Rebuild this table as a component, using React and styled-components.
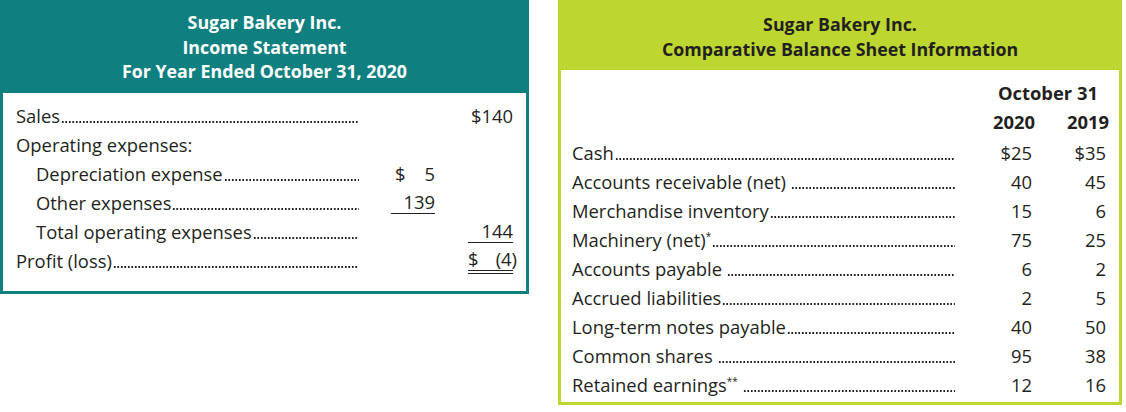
import React from "react";
import styled, { createGlobalStyle } from "styled-components";

const TEAL = "#107f7f";
const LIME = "#bdd630";
const INK = "#231f20";

const GlobalStyle = createGlobalStyle`
  html, body {
    margin: 0;
    padding: 0;
    background: #ffffff;
  }
  body {
    font-family: "Open Sans", "Liberation Sans", sans-serif;
    color: ${INK};
  }
`;

const Page = styled.div`
  display: flex;
  align-items: flex-start;
  gap: 29px;
  width: 1126px;
  height: 412px;
`;

const Panel = styled.section`
  box-sizing: border-box;
  width: ${(p) => p.$width}px;
  border: 3px solid ${(p) => p.$color};
  background: #fff;
`;

const Header = styled.header`
  background: ${(p) => p.$color};
  color: ${(p) => p.$text};
  margin: -3px -3px 0;
  padding: ${(p) => p.$pad};
  text-align: center;
  font-weight: 700;
  font-size: 17.8px;
  line-height: 24.5px;
`;

const Body = styled.div`
  display: grid;
  grid-template-columns: ${(p) => p.$cols};
  padding: ${(p) => p.$pad};
  font-size: 18.4px;
  line-height: 29px;
`;

const Label = styled.div`
  display: flex;
  align-items: baseline;
  min-width: 0;
  padding-left: ${(p) => (p.$indent ? "20px" : "0")};
  grid-column: ${(p) => (p.$full ? "1 / -1" : "auto")};
  white-space: nowrap;
`;

const LabelText = styled.span`
  padding-right: ${(p) => (p.$space ? "5px" : "1px")};
`;

// dotted leader drawn as a repeating dot pattern sitting on the baseline
const Dots = styled.span`
  flex: 1;
  height: 2px;
  background-image: radial-gradient(circle, ${INK} 0.7px, transparent 1px);
  background-size: 3.5px 2px;
  background-repeat: repeat-x;
  background-position: left bottom;
`;

const Star = styled.sup`
  font-size: 10px;
  line-height: 0;
  vertical-align: 7px;
`;

const Cell = styled.div`
  display: flex;
  justify-content: flex-end;
  align-items: flex-start;
`;

const Amount = styled.div`
  box-sizing: border-box;
  display: flex;
  justify-content: space-between;
  width: ${(p) => p.$w}px;
  line-height: ${(p) => (p.$rule ? "22px" : "29px")};
  margin-top: ${(p) => (p.$rule === "double" ? "2px" : p.$rule ? "3px" : "0")};
  border-bottom: ${(p) =>
    p.$rule === "double"
      ? `4px double ${INK}`
      : p.$rule
      ? `1.5px solid ${INK}`
      : "none"};
`;

const Hang = styled.span`
  margin-right: -4px;
`;

const Spacer = styled.div``;

const DateHead = styled.div`
  grid-column: 2 / 4;
  text-align: right;
  padding-right: 8px;
  font-weight: 700;
`;

const Year = styled.div`
  text-align: right;
  font-weight: 700;
  margin-right: -3px;
  margin-bottom: 2px;
`;

function Leader({ text, space, star, indent }) {
  return (
    <Label $indent={indent}>
      <LabelText $space={space}>
        {text}
        {star && <Star>{star}</Star>}
      </LabelText>
      <Dots />
    </Label>
  );
}

const balance = [
  ["Cash", "$25", "$35"],
  ["Accounts receivable (net)", "40", "45", true],
  ["Merchandise inventory", "15", "6"],
  ["Machinery (net)", "75", "25", false, "*"],
  ["Accounts payable", "6", "2", true],
  ["Accrued liabilities", "2", "5"],
  ["Long-term notes payable", "40", "50"],
  ["Common shares", "95", "38", true],
  ["Retained earnings", "12", "16", true, "**"],
];

function IncomeStatement() {
  return (
    <Panel $width={529} $color={TEAL}>
      <Header $color={TEAL} $text="#fff" $pad="10px 0 9px">
        <div>Sugar Bakery Inc.</div>
        <div>Income Statement</div>
        <div>For Year Ended October 31, 2020</div>
      </Header>
      <Body $cols="1fr 76px 78px" $pad="8px 13px 16px">
        <Leader text="Sales" />
        <Spacer />
        <Cell>$140</Cell>

        <Label $full>Operating expenses:</Label>

        <Leader text="Depreciation expense" indent />
        <Cell>
          <Amount $w={40}>
            <span>$</span>
            <span>5</span>
          </Amount>
        </Cell>
        <Spacer />

        <Leader text="Other expenses" indent />
        <Cell>
          <Amount $w={44} $rule="single">
            <span />
            <span>139</span>
          </Amount>
        </Cell>
        <Spacer />

        <Leader text="Total operating expenses" indent />
        <Spacer />
        <Cell>
          <Amount $w={45} $rule="single">
            <span />
            <span>144</span>
          </Amount>
        </Cell>

        <Leader text="Profit (loss)" />
        <Spacer />
        <Cell>
          <Amount $w={45} $rule="double">
            <span>$</span>
            <Hang>(4)</Hang>
          </Amount>
        </Cell>
      </Body>
    </Panel>
  );
}

function BalanceSheet() {
  return (
    <Panel $width={564} $color={LIME}>
      <Header $color={LIME} $text={INK} $pad="12px 0 9px">
        <div>Sugar Bakery Inc.</div>
        <div>Comparative Balance Sheet Information</div>
      </Header>
      <Body $cols="1fr 77px 74px" $pad="8px 13px 3px 11px">
        <Spacer />
        <DateHead>October 31</DateHead>
        <Spacer />
        <Year>2020</Year>
        <Year>2019</Year>
        {balance.map(([label, a, b, space, star]) => (
          <React.Fragment key={label}>
            <Leader text={label} space={space} star={star} />
            <Cell>{a}</Cell>
            <Cell>{b}</Cell>
          </React.Fragment>
        ))}
      </Body>
    </Panel>
  );
}

export default function App() {
  return (
    <>
      <GlobalStyle />
      <Page>
        <IncomeStatement />
        <BalanceSheet />
      </Page>
    </>
  );
}
